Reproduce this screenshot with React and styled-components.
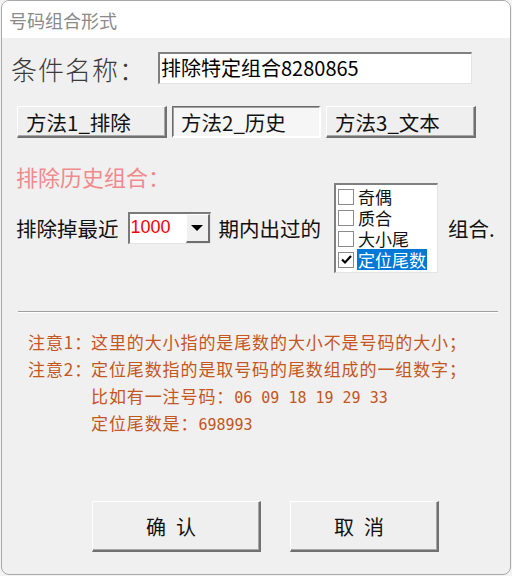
import styled, { createGlobalStyle } from "styled-components";

const Global = createGlobalStyle`
  html, body { margin: 0; padding: 0; background: #f3f3f3; }
  body { font-family: "Noto Sans CJK SC", "Liberation Sans", sans-serif; }
`;

const Window = styled.div`
  box-sizing: border-box;
  width: 510px;
  height: 575px;
  margin: 0 1px;
  border: 1px solid #a8a8a8;
  border-radius: 8px;
  overflow: hidden;
  background: #f0f0f0;
  display: flex;
  flex-direction: column;
`;

const TitleBar = styled.div`
  height: 37px;
  background: #fff;
  display: flex;
  align-items: center;
  padding-left: 7px;
  font-size: 18px;
  color: #8a8a8a;
`;

const Body = styled.div`
  flex: 1;
  display: flex;
  flex-direction: column;
  padding: 0 4px 0 14px;
`;

const NameRow = styled.div`
  display: flex;
  align-items: center;
  margin-top: 14px;
  height: 32px;
`;

const NameLabel = styled.div`
  width: 145px;
  font-size: 26px;
  color: #3a3a3a;
  letter-spacing: 1px;
  margin-left: -5px;
  font-family: "Noto Sans CJK SC", serif;
  font-weight: 300;
`;

const TextBox = styled.div`
  box-sizing: border-box;
  width: 314px;
  height: 32px;
  margin-left: 2px;
  background: #fff;
  border-top: 2px solid #808080;
  border-left: 2px solid #808080;
  border-right: 1px solid #e4e4e4;
  border-bottom: 1px solid #e4e4e4;
  font-size: 20px;
  line-height: 27px;
  padding-left: 1px;
  color: #000;
`;

const TabRow = styled.div`
  display: flex;
  gap: 5px;
  margin-top: 22px;
  margin-left: 1px;
`;

const Btn = styled.div`
  box-sizing: border-box;
  width: ${(p) => p.$w}px;
  height: ${(p) => p.$h}px;
  display: flex;
  align-items: center;
  justify-content: ${(p) => (p.$center ? "center" : "flex-start")};
  padding-left: ${(p) => (p.$center ? 0 : 8)}px;
  font-size: ${(p) => p.$fs || 20.5}px;
  letter-spacing: ${(p) => p.$ls || 0}px;
  color: #111;
  background: ${(p) => (p.$down ? "#f6f6f6" : "#efefef")};
  border-top: 1px solid ${(p) => (p.$down ? "#6a6a6a" : "#fff")};
  border-left: 1px solid ${(p) => (p.$down ? "#6a6a6a" : "#fff")};
  border-right: 2px solid ${(p) => (p.$down ? "#fff" : "#707070")};
  border-bottom: 2px solid ${(p) => (p.$down ? "#fff" : "#707070")};
  box-shadow: ${(p) =>
    p.$down ? "inset 1px 1px 0 #a0a0a0" : "inset -1px -1px 0 #a8a8a8"};
`;

const Heading = styled.div`
  margin-top: 23px;
  font-size: 22px;
  color: #f28a8c;
  line-height: 30px;
`;

const FilterRow = styled.div`
  display: flex;
  align-items: center;
  margin-top: -8px;
  font-size: 20.5px;
  color: #111;
  white-space: nowrap;
  & > * { flex-shrink: 0; }
`;

const Select = styled.div`
  box-sizing: border-box;
  width: 83px;
  height: 32px;
  margin: 0 8px 0 9px;
  display: flex;
  background: #fff;
  border-top: 2px solid #7a7a7a;
  border-left: 2px solid #7a7a7a;
  border-right: 1px solid #e4e4e4;
  border-bottom: 1px solid #e4e4e4;
`;

const SelectValue = styled.div`
  flex: 1;
  color: #ff0000;
  font-size: 18px;
  line-height: 26px;
  padding-left: 1px;
  font-family: "Liberation Sans", sans-serif;
`;

const Arrow = styled.div`
  box-sizing: border-box;
  width: 24px;
  display: flex;
  align-items: center;
  justify-content: center;
  background: #f0f0f0;
  border-top: 1px solid #fff;
  border-left: 1px solid #fff;
  border-right: 2px solid #6e6e6e;
  border-bottom: 2px solid #6e6e6e;
  &::after {
    content: "";
    border-left: 6px solid transparent;
    border-right: 6px solid transparent;
    border-top: 6px solid #000;
  }
`;

const ListBox = styled.div`
  box-sizing: border-box;
  width: 104px;
  height: 90px;
  margin: 0 10px 0 13px;
  background: #fff;
  border-top: 2px solid #808080;
  border-left: 2px solid #808080;
  border-right: 1px solid #e4e4e4;
  border-bottom: 1px solid #e4e4e4;
  padding: 1px 0 0 2px;
  display: flex;
  flex-direction: column;
`;

const ListItem = styled.div`
  display: flex;
  align-items: center;
  height: 21px;
  font-size: 17px;
  line-height: 21px;
`;

const Box = styled.span`
  box-sizing: border-box;
  width: 16px;
  height: 16px;
  border: 1px solid #8a8a8a;
  background: #fff;
  margin-right: 3px;
  display: flex;
  align-items: center;
  justify-content: center;
`;

const ItemText = styled.span`
  padding: 0 1px;
  color: ${(p) => (p.$sel ? "#fff" : "#111")};
  background: ${(p) => (p.$sel ? "#0078d7" : "transparent")};
`;

const Separator = styled.div`
  margin: 38px 0 0 2px;
  width: 480px;
  height: 1px;
  background: #a0a0a0;
  border-bottom: 1px solid #fff;
`;

const Notes = styled.div`
  margin: 15px 0 0 12px;
  color: #c4561e;
  font-size: 17px;
  letter-spacing: 0.9px;
  line-height: 27px;
  white-space: nowrap;
  display: grid;
  grid-template-columns: 63px auto;
  grid-auto-rows: 27px;
`;

const Mono = styled.span`
  font-family: "DejaVu Sans Mono", monospace;
  font-size: 15px;
  line-height: 1;
  letter-spacing: 0;
`;

const Footer = styled.div`
  display: flex;
  gap: 29px;
  margin: auto 0 22px 76px;
`;

const Check = () => (
  <svg width="13" height="13" viewBox="0 0 13 13">
    <path d="M2 6.5 L5 9.5 L11 3" fill="none" stroke="#000" strokeWidth="2.2" />
  </svg>
);

const items = ["奇偶", "质合", "大小尾", "定位尾数"];

export default function App() {
  return (
    <>
      <Global />
      <Window>
        <TitleBar>号码组合形式</TitleBar>
        <Body>
          <NameRow>
            <NameLabel>条件名称：</NameLabel>
            <TextBox>排除特定组合8280865</TextBox>
          </NameRow>
          <TabRow>
            <Btn $w={150} $h={32}>方法1_排除</Btn>
            <Btn $w={149} $h={32} $down>方法2_历史</Btn>
            <Btn $w={150} $h={32}>方法3_文本</Btn>
          </TabRow>
          <Heading>排除历史组合：</Heading>
          <FilterRow>
            <span>排除掉最近</span>
            <Select>
              <SelectValue>1000</SelectValue>
              <Arrow />
            </Select>
            <span>期内出过的</span>
            <ListBox>
              {items.map((t, i) => (
                <ListItem key={t}>
                  <Box>{i === 3 && <Check />}</Box>
                  <ItemText $sel={i === 3}>{t}</ItemText>
                </ListItem>
              ))}
            </ListBox>
            <span>组合.</span>
          </FilterRow>
          <Separator />
          <Notes>
            <span>注意1：</span>
            <span>这里的大小指的是尾数的大小不是号码的大小；</span>
            <span>注意2：</span>
            <span>定位尾数指的是取号码的尾数组成的一组数字；</span>
            <span />
            <span>
              比如有一注号码：<Mono>06 09 18 19 29 33</Mono>
            </span>
            <span />
            <span>
              定位尾数是：<Mono>698993</Mono>
            </span>
          </Notes>
          <Footer>
            <Btn $w={169} $h={51} $center $fs={20} $ls={10}>确认</Btn>
            <Btn $w={149} $h={51} $center $fs={20} $ls={10}>取消</Btn>
          </Footer>
        </Body>
      </Window>
    </>
  );
}
